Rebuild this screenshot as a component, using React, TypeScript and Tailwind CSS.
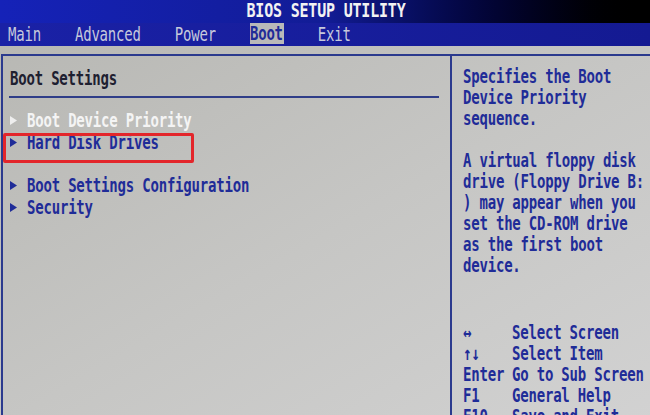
const menu = ["Main", "Advanced", "Power", "Boot", "Exit"];

const help = [
  "Specifies the Boot",
  "Device Priority",
  "sequence.",
  "",
  "A virtual floppy disk",
  "drive (Floppy Drive B:",
  ") may appear when you",
  "set the CD-ROM drive",
  "as the first boot",
  "device.",
];

const keys = [
  { k: "↔", v: "Select Screen" },
  { k: "↑↓", v: "Select Item" },
  { k: "Enter", v: "Go to Sub Screen" },
  { k: "F1", v: "General Help" },
  { k: "F10", v: "Save and Exit" },
];

const items = [
  { label: "Boot Device Priority", active: true },
  { label: "Hard Disk Drives" },
  null,
  { label: "Boot Settings Configuration" },
  { label: "Security" },
];

function T({ children }: { children: React.ReactNode }) {
  return <span className="inline-block scale-y-[1.35] whitespace-pre">{children}</span>;
}

function Arrow({ white }: { white?: boolean }) {
  return (
    <svg width="7" height="9" viewBox="0 0 7 9" className="shrink-0">
      <path d="M0 0 L7 4.5 L0 9 Z" fill={white ? "#eeeeee" : "#1f2c98"} />
    </svg>
  );
}

export default function App() {
  return (
    <div
      className="relative w-[650px] h-[415px] overflow-hidden flex flex-col font-bold text-[14px] tracking-[-0.2px]"
      style={{ fontFamily: '"DejaVu Sans Mono", "Liberation Mono", monospace' }}
    >
      <div className="h-[23px] shrink-0 flex items-center justify-center bg-gradient-to-r from-[#1522b8] via-[#121c96] to-[#000000] text-[#f2f2f2]">
        <span className="inline-block scale-y-[1.3] text-[15px] pl-[2px]">BIOS SETUP UTILITY</span>
      </div>
      <div className="h-[23px] shrink-0 flex items-stretch pl-[8px] gap-[34px] bg-gradient-to-r from-[#1a21a6] to-[#141a92] text-[#c6c9dc] font-normal">
        {menu.map((m) =>
          m === "Boot" ? (
            <span key={m} className="flex items-center bg-[#b9b9b9] text-[#1f2c98] font-bold mb-[2px] pr-[1px]">
              <T>{m}</T>
            </span>
          ) : (
            <span key={m} className="flex items-center">
              <T>{m}</T>
            </span>
          )
        )}
      </div>
      <div className="flex-1 pt-[8px] bg-gradient-to-br from-[#b8b8b4] via-[#c6c6c4] to-[#d2d2d2]">
        <div className="ml-[1px] h-full flex border-t-2 border-l-2 border-[#2b3a8e]">
          <div className="w-[449px] shrink-0 border-r-2 border-[#2b3a8e] pt-[11px] text-[#1f2c98]">
            <div className="pl-[7px] h-[22px] leading-[22px] text-[#1e2030]">
              <T>Boot Settings</T>
            </div>
            <div className="mt-[7px] ml-[6px] w-[430px] h-[2px] bg-[#2f3d88]" />
            <div className="mt-[11px] flex flex-col">
              {items.map((it, i) =>
                it ? (
                  <div key={i} className="h-[22px] flex items-center gap-[10px] pl-[7px]">
                    <Arrow white={it.active} />
                    <span className={it.active ? "text-[#f4f4f4]" : ""}>
                      <T>{it.label}</T>
                    </span>
                  </div>
                ) : (
                  <div key={i} className="h-[21px]" />
                )
              )}
            </div>
          </div>
          <div className="flex-1 pl-[11px] pt-[10px] text-[#1f2c98]">
            {help.map((l, i) => (
              <div key={i} className="h-[21px] leading-[21px]">
                <T>{l}</T>
              </div>
            ))}
            <div className="mt-[46px] grid grid-cols-[49px_1fr]">
              {keys.map(({ k, v }) => (
                <div key={k} className="contents">
                  <div className="h-[21px] leading-[21px]">
                    <T>{k}</T>
                  </div>
                  <div className="h-[21px] leading-[21px]">
                    <T>{v}</T>
                  </div>
                </div>
              ))}
            </div>
          </div>
        </div>
      </div>
      <div className="absolute left-[3px] top-[133px] w-[191px] h-[30px] border-[3px] border-[#e3262b] rounded-[2px]" />
    </div>
  );
}
